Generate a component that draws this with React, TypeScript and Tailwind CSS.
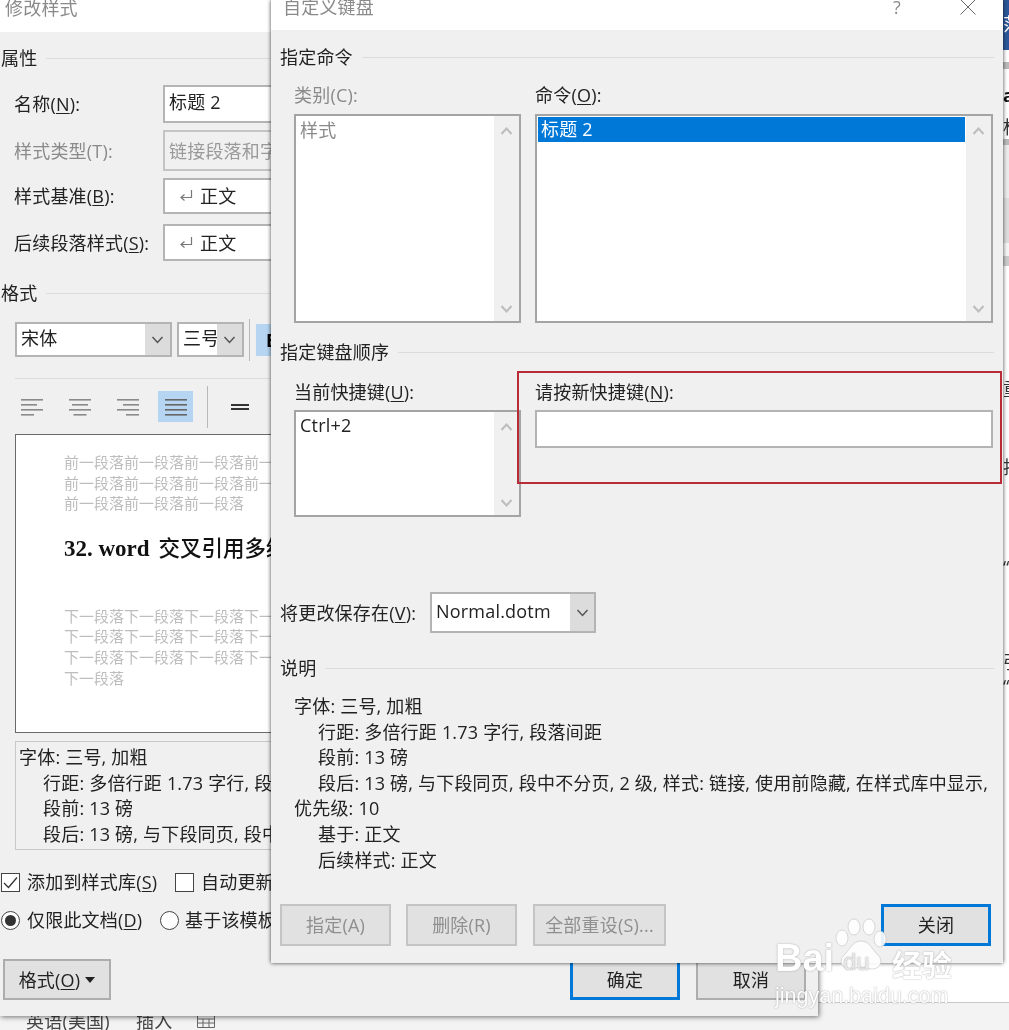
import type { ReactNode } from "react";

const FONT = "font-['Open_Sans','Noto_Sans_CJK_SC',sans-serif]";

// underlined mnemonic label, e.g. 名称(N):
const Key = ({ text, k, gray }: { text: string; k: string; gray?: boolean }) => (
  <span className={`whitespace-nowrap ${gray ? "text-[#8a8a8a]" : "text-[#222]"}`}>
    {text}({gray ? k : <span className="underline underline-offset-2">{k}</span>}):
  </span>
);

const Heading = ({ text, className = "" }: { text: string; className?: string }) => (
  <div className={`flex h-[20px] items-center gap-[9px] ${className}`}>
    <span className="text-[#222]">{text}</span>
    <div className="h-px flex-1 bg-[#dcdcdc]" />
  </div>
);

const Chevron = ({ up, color = "#555" }: { up?: boolean; color?: string }) => (
  <svg width="13" height="8" viewBox="0 0 13 8" fill="none">
    <path d={up ? "M1.5 7 6.5 1.5 11.5 7" : "M1.5 1 6.5 6.5 11.5 1"} stroke={color} strokeWidth={up || color !== "#555" ? 2 : 1.5} />
  </svg>
);

const ListBox = ({ className = "", gray, children }: { className?: string; gray?: boolean; children?: ReactNode }) => (
  <div className={`flex border-2 border-[#a4a4a4] bg-white ${className}`}>
    <div className={`min-w-0 flex-1 p-[1px] ${gray ? "text-[#8a8a8a]" : "text-[#222]"}`}>{children}</div>
    <div className="flex w-[25px] flex-col items-center justify-between bg-[#f0f0f0] pb-[8px] pt-[11px]">
      <Chevron up color="#bdbdbd" />
      <Chevron color="#bdbdbd" />
    </div>
  </div>
);

const Select = ({ label, arrow = 27, className = "" }: { label: string; arrow?: number; className?: string }) => (
  <div className={`flex h-[35px] border-2 border-[#b4b4b4] bg-white ${className}`}>
    <div className="flex min-w-0 flex-1 items-center overflow-hidden whitespace-nowrap pb-[4px] pl-[4px] text-[#222]">{label}</div>
    <div className="flex items-center justify-center bg-[#dcdcdc]" style={{ width: arrow - 2 }}>
      <Chevron />
    </div>
  </div>
);

const Btn = ({ children, primary, disabled, className = "" }: { children: ReactNode; primary?: boolean; disabled?: boolean; className?: string }) => (
  <div
    className={`flex h-[42px] items-center justify-center bg-[#e1e1e1] ${
      primary ? "border-[3px] border-[#0078d7] text-[#222]" : disabled ? "border-2 border-[#c4c4c4] text-[#8f8f8f]" : "border-2 border-[#adadad] text-[#222]"
    } ${className}`}
  >
    {children}
  </div>
);

const Field = ({ label, h, disabled, arrow, children }: { label: ReactNode; h: string; disabled?: boolean; arrow?: boolean; children: ReactNode }) => (
  <div className={`flex items-center ${h}`}>
    <div className="w-[149px] shrink-0">{label}</div>
    <div className={`flex h-full w-[640px] items-center border-2 ${disabled ? "border-[#c4c4c4] bg-[#f0f0f0] text-[#9a9a9a]" : "border-[#b4b4b4] bg-white text-[#222]"} ${arrow ? "pl-[14px]" : "pl-[4px]"}`}>
      {children}
    </div>
  </div>
);

const ReturnArrow = () => (
  <svg width="14" height="14" viewBox="0 0 14 14" fill="none" className="mr-[7px]">
    <path d="M12.5 1v7.5H2M5.5 5.5 2 8.5l3.5 3" stroke="#777" strokeWidth="1.2" />
  </svg>
);

const AlignIcon = ({ widths, anchor, dark }: { widths: number[]; anchor: "l" | "c" | "r"; dark?: boolean }) => (
  <svg width="22" height="18" viewBox="0 0 22 18" fill="none">
    {widths.map((w, i) => {
      const x = anchor === "l" ? 0 : anchor === "r" ? 22 - w : (22 - w) / 2;
      return <rect key={i} x={x} y={i * 5 + 1} width={w} height="1.6" fill={dark ? "#666" : "#8a8a8a"} />;
    })}
  </svg>
);

const PreviewLines = ({ lines, className = "" }: { lines: string[]; className?: string }) => (
  <div className={`whitespace-nowrap text-[15px] leading-[20.6px] tracking-normal text-[#bdbdbd] ${className}`}>
    {lines.map((l, i) => (
      <div key={i}>{l}</div>
    ))}
  </div>
);

const Check = ({ checked }: { checked?: boolean }) => (
  <div className="flex h-[19px] w-[19px] items-center justify-center border border-[#444] bg-white">
    {checked && (
      <svg width="15" height="13" viewBox="0 0 15 13" fill="none">
        <path d="M1 7l4.5 4.5L14 1.5" stroke="#333" strokeWidth="1.3" />
      </svg>
    )}
  </div>
);

const Radio = ({ checked }: { checked?: boolean }) => (
  <div className="flex h-[19px] w-[19px] items-center justify-center rounded-full border border-[#444] bg-white">
    {checked && <div className="h-[11px] w-[11px] rounded-full bg-[#333]" />}
  </div>
);

const BackWindow = () => (
  <div className="absolute left-0 top-0 h-[1016px] w-[818px] overflow-hidden bg-[#f0f0f0] shadow-[1px_1px_5px_rgba(0,0,0,0.55)]">
    <div className="h-[32px] bg-white pl-[5px] leading-[16px] text-[#8a8a8a]">修改样式</div>
    <Heading text="属性" className="mt-[16px] pl-[1px]" />
    <div className="mt-[17px] flex flex-col gap-[7px] pl-[14px]">
      <Field label={<Key text="名称" k="N" />} h="h-[38px]">
        <span className="-mt-[5px]">标题 2</span>
      </Field>
      <Field label={<Key text="样式类型" k="T" gray />} h="h-[41px]" disabled>
        链接段落和字符
      </Field>
      <Field label={<Key text="样式基准" k="B" />} h="h-[36px]" arrow>
        <ReturnArrow />
        正文
      </Field>
      <div className="mt-[3px]">
        <Field label={<Key text="后续段落样式" k="S" />} h="h-[37px]" arrow>
          <ReturnArrow />
          正文
        </Field>
      </div>
    </div>
    <Heading text="格式" className="mt-[22px] pl-[1px]" />
    <div className="mt-[19px] flex h-[35px] items-center pl-[15px]">
      <Select label="宋体" className="w-[157px]" />
      <Select label="三号" arrow={27} className="ml-[5px] w-[67px]" />
      <div className="ml-[5px] h-[42px] w-px shrink-0 bg-[#b8b8b8]" />
      <div className="ml-[6px] flex h-[32px] w-[60px] items-center bg-[#b5d5f2] pl-[10px] font-bold">B</div>
    </div>
    <div className="ml-[15px] mt-[21px] h-px bg-[#dcdcdc]" />
    <div className="ml-[14px] mt-[12px] flex h-[31px] items-center">
      <div className="flex w-[35px] justify-center"><AlignIcon anchor="l" widths={[22, 16, 22, 13]} /></div>
      <div className="ml-[13px] flex w-[35px] justify-center"><AlignIcon anchor="c" widths={[22, 16, 22, 13]} /></div>
      <div className="ml-[13px] flex w-[35px] justify-center"><AlignIcon anchor="r" widths={[22, 16, 22, 13]} /></div>
      <div className="ml-[13px] flex h-[31px] w-[35px] items-center justify-center bg-[#b5d5f2]"><AlignIcon anchor="l" widths={[22, 22, 22, 22]} dark /></div>
      <div className="ml-[14px] h-[42px] w-px shrink-0 bg-[#b8b8b8]" />
      <div className="ml-[23px] flex flex-col gap-[2px]">
        <div className="h-[2px] w-[18px] bg-[#333]" />
        <div className="h-[2px] w-[18px] bg-[#333]" />
      </div>
    </div>
    <div className="ml-[15px] mt-[12px] h-[299px] overflow-hidden border border-[#696969] bg-white pl-[48px] pt-[17px]">
      <PreviewLines lines={["前一段落前一段落前一段落前一段落前一段落", "前一段落前一段落前一段落前一段落前一段落", "前一段落前一段落前一段落"]} />
      <div className="mt-[20px] whitespace-nowrap font-['Liberation_Serif','Noto_Sans_CJK_SC',serif] text-[23px] font-bold leading-[30px] tracking-normal text-[#111]">
        32. word <span className="ml-[3px] text-[21.5px] font-medium">交叉引用多级标题</span>
      </div>
      <PreviewLines
        className="mt-[42px]"
        lines={["下一段落下一段落下一段落下一段落下一段落", "下一段落下一段落下一段落下一段落下一段落", "下一段落下一段落下一段落下一段落下一段落", "下一段落"]}
      />
    </div>
    <div className="ml-[15px] mt-[8px] h-[109px] overflow-hidden whitespace-nowrap border border-[#c8c8c8] pl-[3px] pt-[3px] leading-[25.5px] text-[#222]">
      <div>字体: 三号, 加粗</div>
      <div className="pl-[24px]">行距: 多倍行距 1.73 字行, 段落间距</div>
      <div className="pl-[24px]">段前: 13 磅</div>
      <div className="pl-[24px]">段后: 13 磅, 与下段同页, 段中不分页</div>
    </div>
    <div className="mt-[22px] flex h-[20px] items-center pl-[1px]">
      <Check checked />
      <span className="ml-[7px] w-[148px] whitespace-nowrap text-[#222]">
        添加到样式库(<span className="underline underline-offset-2">S</span>)
      </span>
      <Check />
      <span className="ml-[7px] whitespace-nowrap text-[#222]">自动更新(U)</span>
    </div>
    <div className="mt-[18px] flex h-[20px] items-center pl-[1px]">
      <Radio checked />
      <span className="ml-[7px] w-[133px] whitespace-nowrap text-[#222]">
        仅限此文档(<span className="underline underline-offset-2">D</span>)
      </span>
      <Radio />
      <span className="ml-[6px] whitespace-nowrap text-[#222]">基于该模板的新文档</span>
    </div>
    <div className="mt-[29px] flex pl-[3px]">
      <Btn className="!h-[41px] w-[108px]">
        格式(<span className="underline underline-offset-2">O</span>)
        <svg width="10" height="6" viewBox="0 0 10 6" className="ml-[5px]">
          <path d="M0 0h10L5 6z" fill="#222" />
        </svg>
      </Btn>
      <Btn primary className="!h-[41px] ml-[459px] w-[110px]">确定</Btn>
      <Btn className="!h-[41px] ml-[16px] w-[110px]">取消</Btn>
    </div>
  </div>
);

const KeyboardDialog = () => (
  <div className="absolute left-[271px] top-0 h-[963px] w-[732px] overflow-hidden bg-[#f0f0f0] shadow-[0_0_4px_rgba(0,0,0,0.75)]">
    <div className="flex h-[30px] items-start bg-white pl-[12px] leading-[14px] text-[#8a8a8a]">
      <span>自定义键盘</span>
      <span className="ml-auto mr-[59px]">?</span>
      <svg width="16" height="16" viewBox="0 0 16 16" fill="none" className="mr-[27px] -mt-[1px]">
        <path d="M0.5 0.5 15.5 15.5M15.5 0.5 0.5 15.5" stroke="#666" strokeWidth="1" />
      </svg>
    </div>
    <div className="px-[9px]">
      <Heading text="指定命令" className="mt-[17px]" />
      <div className="ml-[14px] mt-[18px] grid grid-cols-[227px_458px] gap-x-[14px]">
        <div className="h-[20px] leading-[20px]"><span className="text-[#8a8a8a]">类别(C):</span></div>
        <div className="h-[20px] leading-[20px]"><Key text="命令" k="O" /></div>
        <ListBox gray className="mt-[9px] h-[209px]">
          <div className="pl-[3px] leading-[26px]">样式</div>
        </ListBox>
        <ListBox className="mt-[9px] h-[209px]">
          <div className="bg-[#0078d7] pl-[3px] leading-[25px] text-white">标题 2</div>
        </ListBox>
      </div>
      <Heading text="指定键盘顺序" className="mt-[19px]" />
      <div className="ml-[14px] mt-[20px] grid grid-cols-[227px_458px] items-start gap-x-[14px]">
        <div className="h-[20px] leading-[20px]"><Key text="当前快捷键" k="U" /></div>
        <div className="h-[20px] leading-[20px]"><Key text="请按新快捷键" k="N" /></div>
        <ListBox className="mt-[8px] h-[107px]">
          <div className="pl-[3px] leading-[24px]">Ctrl+2</div>
        </ListBox>
        <div className="mt-[8px] h-[38px] border-2 border-[#b4b4b4] bg-white" />
      </div>
      <div className="mt-[75px] flex h-[41px] items-center">
        <div className="w-[150px] shrink-0"><Key text="将更改保存在" k="V" /></div>
        <div className="flex h-[41px] w-[166px] border-2 border-[#b4b4b4] bg-white">
          <div className="flex flex-1 items-center pb-[4px] pl-[4px] text-[#222]">Normal.dotm</div>
          <div className="flex w-[24px] items-center justify-center bg-[#dcdcdc]"><Chevron /></div>
        </div>
      </div>
      <Heading text="说明" className="mt-[25px]" />
      <div className="ml-[14px] mt-[16px] w-[699px] leading-[25.6px] text-[#222]">
        <div>字体: 三号, 加粗</div>
        <div className="pl-[24px]">行距: 多倍行距 1.73 字行, 段落间距</div>
        <div className="pl-[24px]">段前: 13 磅</div>
        <div className="indent-[24px]">段后: 13 磅, 与下段同页, 段中不分页, 2 级, 样式: 链接, 使用前隐藏, 在样式库中显示, 优先级: 10</div>
        <div className="pl-[24px]">基于: 正文</div>
        <div className="pl-[24px]">后续样式: 正文</div>
      </div>
      <div className="mt-[31px] flex pr-[3px]">
        <Btn disabled className="w-[111px]">指定(A)</Btn>
        <Btn disabled className="ml-[15px] w-[111px]">删除(R)</Btn>
        <Btn disabled className="ml-[16px] w-[133px]">全部重设(S)...</Btn>
        <Btn primary className="ml-auto w-[110px]">关闭</Btn>
      </div>
    </div>
    {/* red callout drawn over the screenshot */}
    <div className="absolute left-[246px] top-[371px] h-[113px] w-[485px] border-2 border-[#b92b36]" />
  </div>
);

// sliver of the Word document showing past the dialog's right edge
const DocSliver = () => (
  <div className="absolute left-[1003px] top-0 flex h-[1002px] w-[6px] flex-col overflow-hidden whitespace-nowrap text-[#333]">
    <div className="h-[50px] bg-[#2b579a] pt-[14px] text-white">范</div>
    <div className="mt-[12px] h-[7px] bg-[#bbb]" />
    <div className="mt-[14px] h-[24px] font-bold leading-[24px] text-[#111]">a</div>
    <div className="mt-[8px] h-[24px] leading-[24px]">标</div>
    <div className="h-[6px] bg-[#bbb]" />
    <div className="h-[53px] bg-[#ececec]" />
    <div className="h-[45px] bg-[#ddd]" />
    <div className="h-[13px] bg-[#f5f5f5]" />
    <div className="h-[10px] bg-[#ccc]" />
    <div className="mt-[111px] h-[24px] leading-[24px]">重</div>
    <div className="mt-[54px] h-[24px] leading-[24px]">排</div>
    <div className="mt-[76px] h-[24px] leading-[24px]">“</div>
    <div className="mt-[71px] h-[24px] leading-[24px]">引</div>
    <div className="h-[24px] leading-[24px]">“</div>
  </div>
);

const Watermark = () => (
  <div className="absolute left-[775px] top-[918px] h-[90px] w-[185px] tracking-normal text-white [text-shadow:0_0_1.5px_rgba(120,120,120,0.8)]">
    <svg width="64" height="56" viewBox="0 0 64 56" className="absolute left-[54px] top-0 opacity-90">
      <ellipse cx="13" cy="20" rx="6" ry="8" fill="#fff" stroke="#bbb" strokeWidth="0.6" />
      <ellipse cx="25" cy="9" rx="6" ry="8" fill="#fff" stroke="#bbb" strokeWidth="0.6" />
      <ellipse cx="40" cy="9" rx="6" ry="8" fill="#fff" stroke="#bbb" strokeWidth="0.6" />
      <ellipse cx="51" cy="21" rx="6" ry="8" fill="#fff" stroke="#bbb" strokeWidth="0.6" />
      <path d="M32 23c-9 0-11 9-17 14-6 6-2 14 6 14 5 0 7-2 11-2s6 2 11 2c8 0 12-8 6-14-6-5-8-14-17-14z" fill="#fff" stroke="#bbb" strokeWidth="0.6" />
    </svg>
    <span className="absolute left-0 top-[20px] font-['Liberation_Sans',sans-serif] text-[38px] font-bold leading-[40px]">Bai</span>
    <span className="absolute left-[68px] top-[30px] font-['Liberation_Sans',sans-serif] text-[24px] leading-[28px] text-[#e8e8e8]">du</span>
    <span className="absolute left-[117px] top-[30px] text-[30px] font-bold leading-[34px]">经验</span>
    <span className="absolute left-0 top-[66px] font-['Liberation_Sans',sans-serif] text-[21.5px] leading-[24px]">jingyan.baidu.com</span>
  </div>
);

export default function App() {
  return (
    <div className={`relative h-[1030px] w-[1009px] overflow-hidden bg-white text-[18px] leading-[20px] tracking-[0.2px] blur-[0.5px] ${FONT}`}>
      {/* status bar of the document underneath */}
      <div className="absolute bottom-0 left-0 right-0 flex h-[28px] items-center border-t border-[#c8c8c8] bg-[#f3f3f3] pl-[26px] pt-[9px] text-[#444]">
        <span className="w-[110px] whitespace-nowrap">英语(美国)</span>
        <span>插入</span>
        <svg width="18" height="14" viewBox="0 0 18 14" fill="none" className="ml-[25px]">
          <path d="M.5.5h17v13H.5zM.5 5h17M.5 9h17M6 5v8M12 5v8" stroke="#666" />
        </svg>
      </div>
      <DocSliver />
      <BackWindow />
      <KeyboardDialog />
      <Watermark />
    </div>
  );
}
